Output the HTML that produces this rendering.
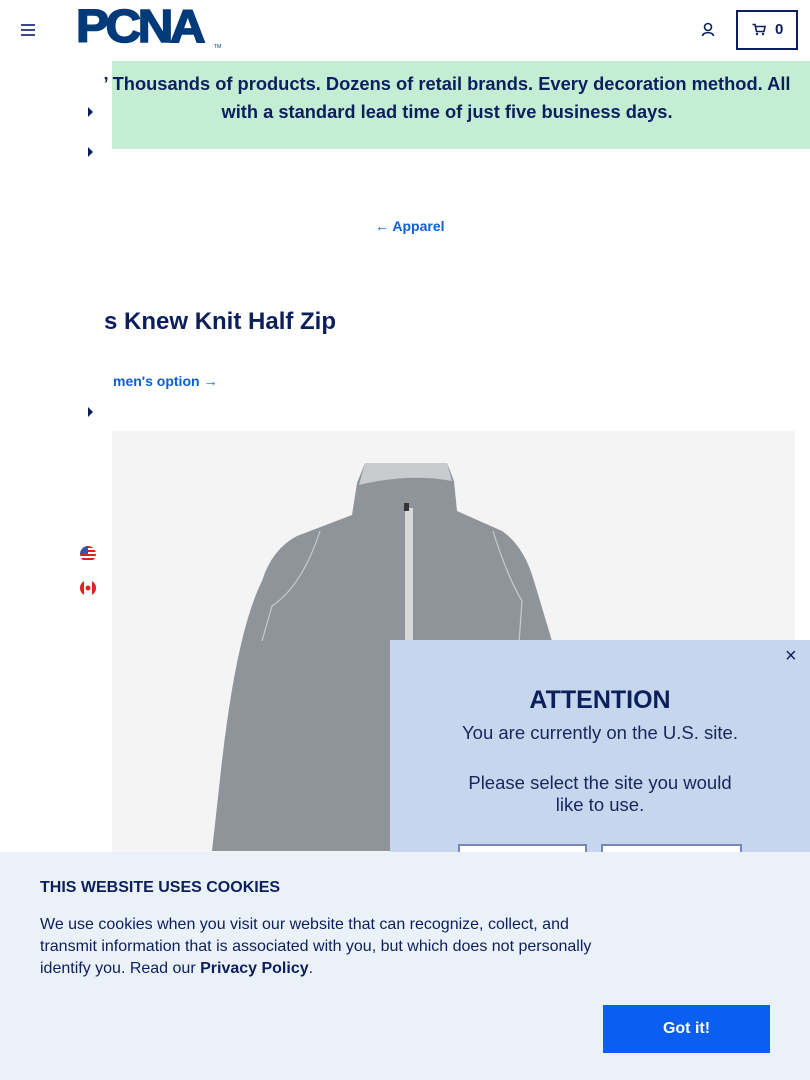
<!DOCTYPE html>
<html><head><meta charset="utf-8">
<style>
*{margin:0;padding:0;box-sizing:border-box}
body{width:810px;height:1080px;overflow:hidden;position:relative;background:#fff;font-family:"Liberation Sans",sans-serif;color:#0b1f5c}
.abs{position:absolute}
</style></head><body>
<div class="abs" style="left:21px;top:24px;width:14px">
<div style="height:2px;background:#3b4a8a;margin-bottom:3px"></div>
<div style="height:2px;background:#3b4a8a;margin-bottom:3px"></div>
<div style="height:2px;background:#3b4a8a"></div></div>
<div class="abs" style="left:76px;top:4px;font:900 44px/44px 'Liberation Sans',sans-serif;color:#003a78;letter-spacing:-3px;transform:scale(1.12,1.05);transform-origin:left top;-webkit-text-stroke:1.5px #003a78">PCNA</div>
<div class="abs" style="left:214px;top:44px;font-size:5px;color:#003a78">TM</div>
<svg class="abs" style="left:701px;top:22px" width="14" height="16" viewBox="0 0 14 16"><circle cx="7" cy="5" r="3.5" fill="none" stroke="#0b1f5c" stroke-width="1.6"/><path d="M1.5 14 C2 9.5 12 9.5 12.5 14" fill="none" stroke="#0b1f5c" stroke-width="1.6"/></svg>
<div class="abs" style="left:736px;top:10px;width:62px;height:40px;border:2px solid #0b1f5c"></div>
<svg class="abs" style="left:752px;top:23px" width="14" height="13" viewBox="0 0 14 13"><path d="M0.5 1.5H3L4.5 8.5H12L13 3.5H3.5" fill="none" stroke="#0b1f5c" stroke-width="1.6"/><circle cx="5" cy="11" r="1.2" fill="#0b1f5c"/><circle cx="11" cy="11" r="1.2" fill="#0b1f5c"/></svg>
<div class="abs" style="left:775px;top:21px;font-weight:700;font-size:15px">0</div>
<div class="abs" style="left:112px;top:61px;width:698px;height:88px;background:#c4eed3"></div>
<div class="abs" style="left:92px;top:70px;width:710px;text-align:center;font-weight:700;font-size:18.3px;line-height:28px;color:#0b1f5c">’ Thousands of products. Dozens of retail brands. Every decoration method. All<br>with a standard lead time of just five business days.</div>
<div class="abs" style="left:88px;top:107px;border-left:5px solid #0b1f5c;border-top:5px solid transparent;border-bottom:5px solid transparent"></div>
<div class="abs" style="left:88px;top:147px;border-left:5px solid #0b1f5c;border-top:5px solid transparent;border-bottom:5px solid transparent"></div>
<div class="abs" style="left:88px;top:407px;border-left:5px solid #0b1f5c;border-top:5px solid transparent;border-bottom:5px solid transparent"></div>
<div class="abs" style="left:375px;top:218px;font-weight:700;font-size:14px;color:#0a5fd6">&larr; Apparel</div>
<div class="abs" style="left:104px;top:308px;font-weight:700;font-size:24px;color:#0b1f5c">s Knew Knit Half Zip</div>
<div class="abs" style="left:113px;top:373px;font-weight:700;font-size:14px;color:#0a5fd6">men's option &rarr;</div>
<svg class="abs" style="left:80px;top:546px" width="16" height="16" viewBox="0 0 16 16"><defs><clipPath id="c"><circle cx="8" cy="8" r="8"/></clipPath></defs><g clip-path="url(#c)"><rect width="16" height="16" fill="#fff"/><rect y="0" width="16" height="2" fill="#d22"/><rect y="4" width="16" height="2" fill="#d22"/><rect y="8" width="16" height="2" fill="#d22"/><rect y="12" width="16" height="2" fill="#d22"/><rect width="8" height="8" fill="#3355aa"/></g></svg>
<svg class="abs" style="left:80px;top:580px" width="16" height="16" viewBox="0 0 16 16"><defs><clipPath id="d"><circle cx="8" cy="8" r="8"/></clipPath></defs><g clip-path="url(#d)"><rect width="16" height="16" fill="#fff"/><rect width="4" height="16" fill="#d22"/><rect x="12" width="4" height="16" fill="#d22"/><circle cx="8" cy="8" r="2.5" fill="#d22"/></g></svg>
<div class="abs" style="left:112px;top:431px;width:683px;height:649px;background:#f4f4f4"></div>
<svg class="abs" style="left:112px;top:431px" width="683" height="649" viewBox="0 0 683 649">
<path d="M253 32 L335 32 L342 50 L345 80 L390 100 Q412 115 422 150 L440 210 L458 270 L470 420 L100 420 L110 330 Q125 200 150 150 Q160 118 185 105 L240 84 L245 52 Z" fill="#8f949b"/>
<path d="M253 32 L335 32 L340 50 Q296 42 247 54 Z" fill="#c9cbce"/>
<path d="M208 100 Q190 155 160 175 L150 210" fill="none" stroke="#c9cbce" stroke-width="1.2"/>
<path d="M381 100 Q395 145 410 170 L405 240" fill="none" stroke="#c9cbce" stroke-width="1.2"/>
<rect x="293" y="77" width="8" height="178" fill="#d8d8d8"/>
<rect x="292" y="72" width="5" height="8" fill="#333"/>
</svg>
<div class="abs" style="left:390px;top:640px;width:420px;height:212px;background:#c6d6ec"></div>
<div class="abs" style="left:785px;top:645px;font-size:20px;color:#0b1f5c">&times;</div>
<div class="abs" style="left:390px;top:686px;width:420px;text-align:center;font-weight:700;font-size:25px">ATTENTION</div>
<div class="abs" style="left:390px;top:722px;width:420px;text-align:center;font-size:18.5px;line-height:22px;color:#17275e">You are currently on the U.S. site.</div>
<div class="abs" style="left:390px;top:772px;width:420px;text-align:center;font-size:18.5px;line-height:22px;color:#17275e">Please select the site you would<br>like to use.</div>
<div class="abs" style="left:458px;top:844px;width:129px;height:20px;border:2px solid #7985bd;background:#fff"></div>
<div class="abs" style="left:601px;top:844px;width:141px;height:20px;border:2px solid #7985bd;background:#fff"></div>
<div class="abs" style="left:0;top:852px;width:810px;height:228px;background:#ebf1f9"></div>
<div class="abs" style="left:40px;top:879px;font-weight:700;font-size:16px;color:#0b1f5c">THIS WEBSITE USES COOKIES</div>
<div class="abs" style="left:40px;top:914px;width:570px;font-size:16px;line-height:22px;color:#0b1f5c">We use cookies when you visit our website that can recognize, collect, and transmit information that is associated with you, but which does not personally identify you. Read our <b>Privacy Policy</b>.</div>
<div class="abs" style="left:603px;top:1005px;width:167px;height:48px;background:#0a5ff0;color:#fff;font-weight:700;font-size:16px;text-align:center;line-height:48px">Got it!</div>
</body></html>
